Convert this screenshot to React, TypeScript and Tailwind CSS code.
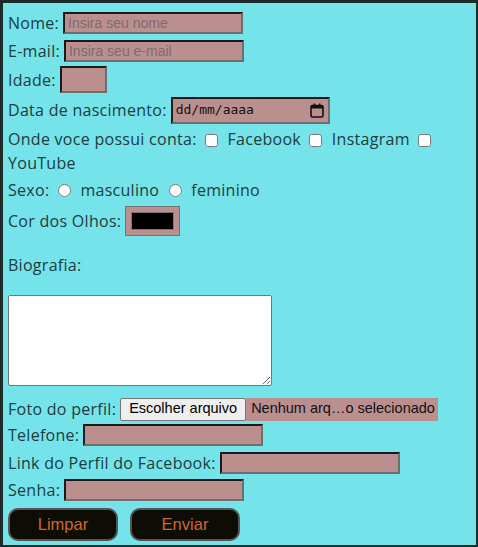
import React from 'react';

const label = "text-[16px] tracking-[0.28px] text-[#1d3d3d] [font-family:'Open_Sans',sans-serif] whitespace-nowrap";
const field =
  "h-[22px] w-[180px] bg-[#bc8f8f] border-2 border-t-[#1a1a1a] border-l-[#1a1a1a] border-r-[#6e6e6e] border-b-[#6e6e6e] px-[3px] text-[14px] text-[#333] placeholder:text-[#7a6d6d] [font-family:'Liberation_Sans',Arial,sans-serif] outline-none";

const App: React.FC = () => {
  return (
    <div className="w-[478px] h-[547px] bg-[#74e3ea] border-[3px] border-r-2 border-b-2 border-[#1c2a2a] pl-[5px] pt-[6px] overflow-hidden">
      {/* Nome */}
      <div className="flex items-center h-[28px] gap-[4px]">
        <span className={label}>Nome:</span>
        <input className={field} placeholder="Insira seu nome" />
      </div>
      {/* E-mail */}
      <div className="flex items-center h-[28px] gap-[4px]">
        <span className={label}>E-mail:</span>
        <input className={field} placeholder="Insira seu e-mail" />
      </div>
      {/* Idade */}
      <div className="flex items-center h-[29px] gap-[4px]">
        <span className={label}>Idade:</span>
        <input className={`${field} !w-[47px] !h-[27px]`} />
      </div>
      {/* Data */}
      <div className="flex items-center h-[32px] gap-[4px]">
        <span className={label}>Data de nascimento:</span>
        <div className="h-[27px] w-[159px] bg-[#bc8f8f] border-2 border-t-[#1a1a1a] border-l-[#1a1a1a] border-r-[#6e6e6e] border-b-[#6e6e6e] flex items-center justify-between px-[3px]">
          <span className="text-[13px] text-[#111] [font-family:'DejaVu_Sans_Mono',monospace]">dd/mm/aaaa</span>
          <svg width="14" height="15" viewBox="0 0 14 15" className="mr-[1px]">
            <rect x="1" y="2.5" width="12" height="11.5" rx="1.5" fill="none" stroke="#111" strokeWidth="1.6" />
            <rect x="1" y="2.5" width="12" height="3" fill="#111" />
            <rect x="3.5" y="0.5" width="1.6" height="3" fill="#111" />
            <rect x="8.9" y="0.5" width="1.6" height="3" fill="#111" />
          </svg>
        </div>
      </div>
      {/* Contas */}
      <div className={`${label} !whitespace-normal leading-6 mt-[1px] w-[440px]`}>
        Onde voce possui conta: <input type="checkbox" className="align-middle ml-[4px] mr-[5px]" /> Facebook{' '}
        <input type="checkbox" className="align-middle ml-[4px] mr-[5px]" /> Instagram{' '}
        <input type="checkbox" className="align-middle ml-[4px] mr-[5px]" /> YouTube
      </div>
      {/* Sexo */}
      <div className={`${label} leading-6 mt-[3px] flex items-center`}>
        Sexo:
        <input type="radio" name="sexo" className="ml-[9px] mr-[9px]" />
        masculino
        <input type="radio" name="sexo" className="ml-[10px] mr-[9px]" />
        feminino
      </div>
      {/* Cor */}
      <div className="flex items-center h-[34px] mt-[2px] gap-[4px]">
        <span className={label}>Cor dos Olhos:</span>
        <div className="w-[55px] h-[30px] bg-[#bc8f8f] border border-[#767676] flex items-center justify-center">
          <div className="w-[43px] h-[18px] bg-black border border-[#777]" />
        </div>
      </div>
      {/* Biografia */}
      <div className={`${label} leading-6 mt-[15px]`}>Biografia:</div>
      <textarea className="block mt-[18px] w-[264px] h-[91px] bg-white border border-[#767676] rounded-[2px] outline-none" />
      {/* Foto */}
      <div className="flex items-center h-[24px] mt-[11px] gap-[4px]">
        <span className={label}>Foto do perfil:</span>
        <div className="flex items-center h-[23px] text-[14.5px] [font-family:'Liberation_Sans',Arial,sans-serif]">
          <span className="h-[23px] px-[8px] flex items-center bg-[#efefef] border border-[#767676] rounded-[2px] text-black">Escolher arquivo</span>
          <span className="h-[23px] pl-[5px] pr-[3px] flex items-center bg-[#bc8f8f] text-[#111]">Nenhum arq…o selecionado</span>
        </div>
      </div>
      {/* Telefone */}
      <div className="flex items-center h-[28px] gap-[4px]">
        <span className={label}>Telefone:</span>
        <input className={field} />
      </div>
      {/* Link */}
      <div className="flex items-center h-[27px] gap-[4px]">
        <span className={label}>Link do Perfil do Facebook:</span>
        <input className={field} />
      </div>
      {/* Senha */}
      <div className="flex items-center h-[27px] gap-[4px]">
        <span className={label}>Senha:</span>
        <input type="password" className={field} />
      </div>
      {/* Botões */}
      <div className="flex items-center gap-[12px] mt-[5px]">
        <button className="w-[110px] h-[33px] bg-[#0d0d06] border-2 border-[#555] rounded-[10px] text-[#d2691e] text-[16.5px] [font-family:'Liberation_Sans',Arial,sans-serif]">
          Limpar
        </button>
        <button className="w-[110px] h-[33px] bg-[#0d0d06] border-2 border-[#555] rounded-[10px] text-[#d2691e] text-[16.5px] [font-family:'Liberation_Sans',Arial,sans-serif]">
          Enviar
        </button>
      </div>
    </div>
  );
};

export default App;
